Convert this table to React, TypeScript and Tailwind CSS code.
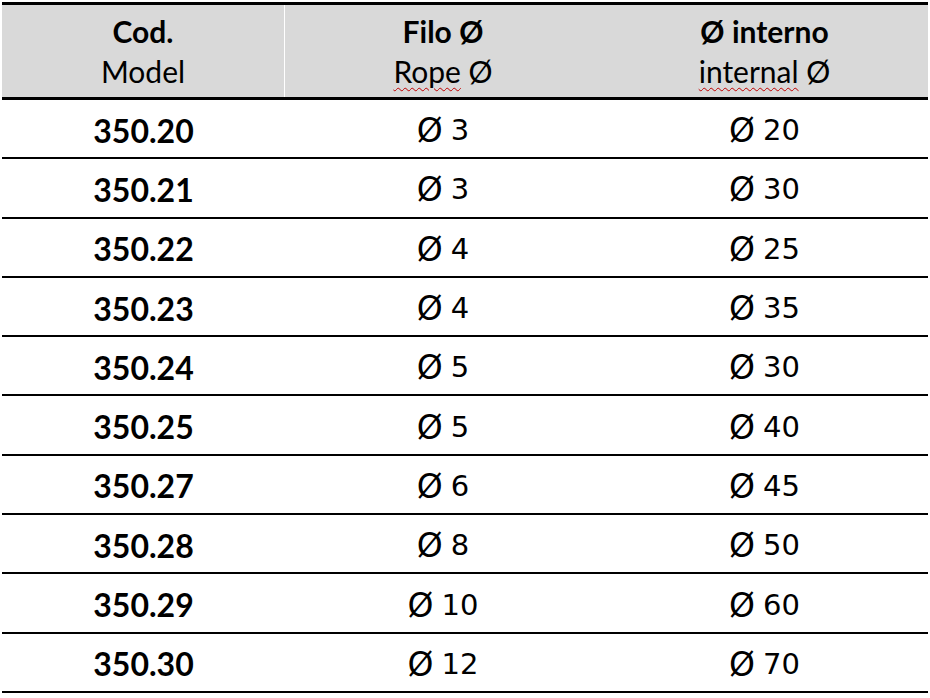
const rows = [
  ["350.20", "3", "20"],
  ["350.21", "3", "30"],
  ["350.22", "4", "25"],
  ["350.23", "4", "35"],
  ["350.24", "5", "30"],
  ["350.25", "5", "40"],
  ["350.27", "6", "45"],
  ["350.28", "8", "50"],
  ["350.29", "10", "60"],
  ["350.30", "12", "70"],
];

const head = "font-['Lato','Open_Sans',sans-serif] text-[30px] leading-[40px] text-black";

function Dia({ value }: { value: string }) {
  return (
    <div className="flex items-center justify-center font-['DejaVu_Sans',sans-serif] text-black">
      <span className="text-[33px] leading-none">Ø</span>
      <span className="ml-[8px] text-[29px] leading-none">{value}</span>
    </div>
  );
}

export default function App() {
  return (
    <main className="h-[698px] w-[930px] bg-white pt-[2px]">
      <div className="mx-[2px] w-[926px]">
        <div className="grid h-[98px] grid-cols-[283px_316px_1fr] border-y-[3px] border-black bg-[#d9d9d9]">
          <div className={`flex flex-col items-center justify-center border-r border-white ${head}`}>
            <span className="font-bold">Cod.</span>
            <span>Model</span>
          </div>
          <div className={`flex flex-col items-center justify-center ${head}`}>
            <span className="font-bold">Filo Ø</span>
            <span>
              <span className="underline decoration-wavy decoration-[#c00000] decoration-1 underline-offset-4">Rope</span> Ø
            </span>
          </div>
          <div className={`flex flex-col items-center justify-center ${head}`}>
            <span className="font-bold">Ø interno</span>
            <span>
              <span className="underline decoration-wavy decoration-[#c00000] decoration-1 underline-offset-4">internal</span> Ø
            </span>
          </div>
        </div>
        {rows.map(([code, rope, inner]) => (
          <div key={code} className="grid h-[59.3px] grid-cols-[283px_316px_1fr] items-center border-b-2 border-black pt-[4px]">
            <div className="text-center font-['Lato','Open_Sans',sans-serif] text-[32px] leading-none font-bold text-black">{code}</div>
            <Dia value={rope} />
            <Dia value={inner} />
          </div>
        ))}
      </div>
    </main>
  );
}
